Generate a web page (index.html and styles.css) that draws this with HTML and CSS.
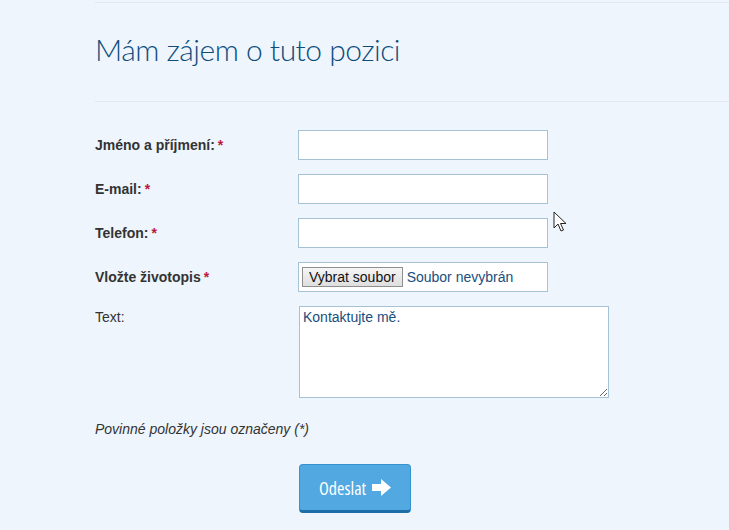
FILE: index.html
```html
<!DOCTYPE html>
<html lang="cs">

<head>
    <meta charset="UTF-8">
    <meta name="viewport" content="width=device-width, initial-scale=1.0">
    <title>Mám zájem o tuto pozici</title>
    <link rel="stylesheet" href="styles.css">
</head>

<body>
    <div class="container">
        <div class="heading">
            <h1>Mám zájem o tuto pozici</h1>
        </div>
        <form class="apply-form">
            <div class="row">
                <label for="name">Jméno a příjmení:<span class="req">*</span></label>
                <input type="text" id="name" class="field">
            </div>
            <div class="row">
                <label for="email">E-mail:<span class="req">*</span></label>
                <input type="text" id="email" class="field">
            </div>
            <div class="row">
                <label for="phone">Telefon:<span class="req">*</span></label>
                <input type="text" id="phone" class="field">
            </div>
            <div class="row">
                <label>Vložte životopis<span class="req">*</span></label>
                <div class="field file-field">
                    <span class="file-btn">Vybrat soubor</span>
                    <span class="file-name">Soubor nevybrán</span>
                </div>
            </div>
            <div class="row row-top">
                <label for="text" class="plain">Text:</label>
                <textarea id="text" class="area">Kontaktujte mě.</textarea>
            </div>
            <p class="note">Povinné položky jsou označeny (*)</p>
            <div class="row">
                <span></span>
                <button type="button" class="send">Odeslat
                    <svg width="19" height="17" viewBox="0 0 19 17"><path d="M0 5h9V0l10 8.5L9 17v-5H0z" fill="#fff"/></svg>
                </button>
            </div>
        </form>
    </div>
    <svg class="cursor" width="14" height="22" viewBox="0 0 14 22">
        <path d="M1 1v16l4-4 3 7 2.5-1-3-6.5h5.5z" fill="#fff" stroke="#222" stroke-width="1"/>
    </svg>
</body>

</html>
```
FILE: styles.css
```css
body {
    margin: 0;
    background-color: #eef5fc;
    font-family: "Liberation Sans", Arial, sans-serif;
    color: #333;
    height: 530px;
    overflow: hidden;
    position: relative;
}

.container {
    padding-left: 95px;
    padding-top: 2px;
}

.heading {
    border-top: 1px solid #e2e8ee;
    border-bottom: 1px solid #e2e8ee;
    box-sizing: border-box;
    height: 100px;
}

h1 {
    margin: 0;
    padding-top: 28px;
    font-family: Lato, sans-serif;
    font-weight: 300;
    font-size: 30px;
    letter-spacing: -0.5px;
    color: #0d4d7c;
}

.apply-form {
    padding-top: 28px;
}

.row {
    display: grid;
    grid-template-columns: 203px auto;
    align-items: center;
    margin-bottom: 14px;
}

.row-top {
    align-items: start;
}

label {
    font-size: 14px;
    font-weight: bold;
}

label.plain {
    font-weight: normal;
    padding-top: 3px;
}

.req {
    color: #c0143c;
    margin-left: 3px;
}

.field {
    width: 250px;
    height: 30px;
    box-sizing: border-box;
    margin: 0;
    border: 1px solid #a6c2d7;
    background: #fff;
    font-family: inherit;
}

.file-field {
    display: flex;
    align-items: center;
    padding: 0 3px;
    font-size: 14px;
}

.file-btn {
    border: 1px solid #8f8f8f;
    background: linear-gradient(#f6f6f6, #dedede);
    padding: 1px 6px;
    color: #111;
}

.file-name {
    color: #1a4e7d;
    margin-left: 4px;
}

.area {
    width: 310px;
    height: 92px;
    box-sizing: border-box;
    margin: 0 0 0 1px;
    border: 1px solid #a6c2d7;
    font-family: inherit;
    font-size: 14px;
    color: #1a4e7d;
    padding: 2px 3px;
    resize: vertical;
}

.note {
    margin: 23px 0 27px;
    font-size: 14px;
    font-style: italic;
}

.send {
    margin-left: 1px;
    width: 112px;
    height: 49px;
    display: flex;
    align-items: center;
    justify-content: center;
    gap: 6px;
    background-color: #52a8e0;
    border: 1px solid #3592cf;
    border-bottom: 3px solid #1d6ea6;
    border-radius: 4px;
    color: #fff;
    font-family: "Open Sans", sans-serif;
    font-stretch: 75%;
    font-size: 18px;
    cursor: pointer;
}

.cursor {
    position: absolute;
    left: 553px;
    top: 211px;
}
```
